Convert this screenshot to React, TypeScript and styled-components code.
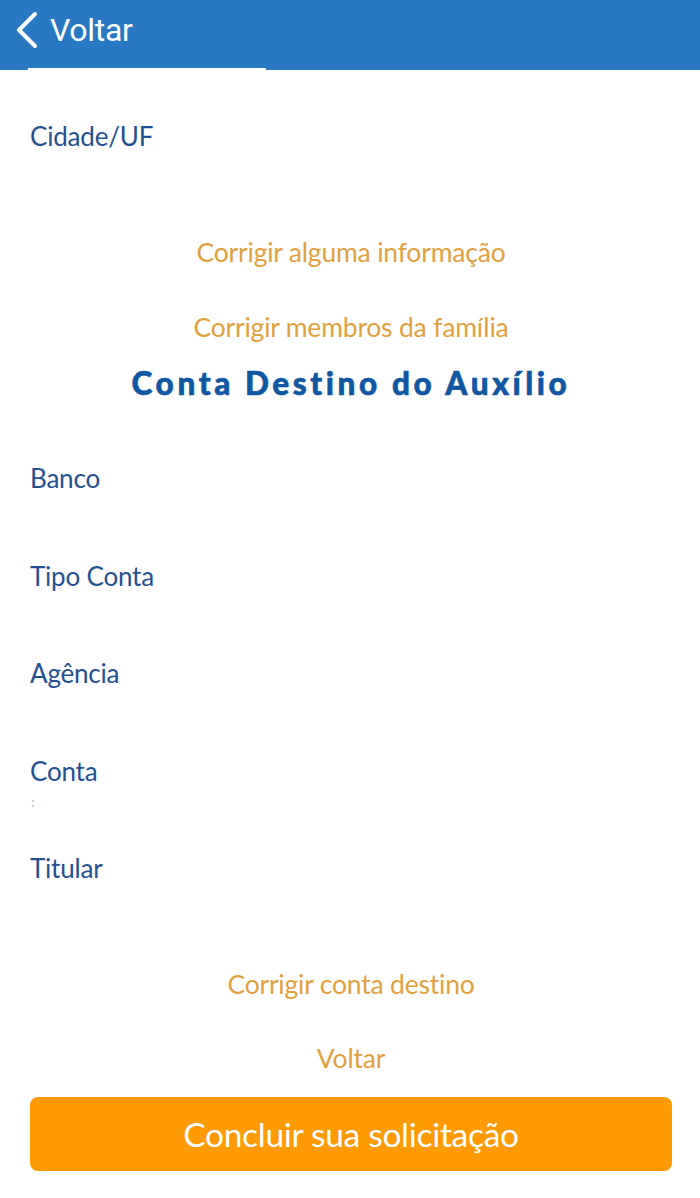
import styled, { createGlobalStyle } from "styled-components";

const GlobalStyle = createGlobalStyle`
    html, body {
        margin: 0;
        padding: 0;
        background: #fff;
    }
    * {
        box-sizing: border-box;
    }
`

const fields = ["Banco", "Tipo Conta", "Agência", "Conta", "Titular"];

export default function App() {
    return (
        <StyledPage>
            <GlobalStyle/>
            <StyledHeader>
                <StyledBackRow>
                    <svg width="26" height="38" viewBox="0 0 26 38">
                        <path d="M21 3 L5 19 L21 35" fill="none" stroke="#fff" strokeWidth="4"
                              strokeLinecap="round" strokeLinejoin="round"/>
                    </svg>
                    <StyledBackText>Voltar</StyledBackText>
                </StyledBackRow>
                <StyledHeaderEdge>
                    <StyledHeaderGap/>
                </StyledHeaderEdge>
            </StyledHeader>

            <StyledContent>
                <StyledLabel $top={50}>Cidade/UF</StyledLabel>

                <StyledLink $top={84}>Corrigir alguma informação</StyledLink>
                <StyledLink $top={43}>Corrigir membros da família</StyledLink>

                <StyledHeading>Conta Destino do Auxílio</StyledHeading>

                <StyledFieldList>
                    {fields.map((f) => (
                        <StyledField key={f}>
                            <StyledLabel $top={0}>{f}</StyledLabel>
                            {f === "Conta" && <StyledMark>:</StyledMark>}
                        </StyledField>
                    ))}
                </StyledFieldList>

                <StyledLink $top={18}>Corrigir conta destino</StyledLink>
                <StyledLink $top={42}>Voltar</StyledLink>

                <StyledButton>Concluir sua solicitação</StyledButton>
            </StyledContent>
        </StyledPage>
    );
}

const StyledPage = styled.div`
    width: 700px;
    min-height: 1198px;
    background: #fff;
    font-family: "Lato", "Noto Sans", sans-serif;
`

const StyledHeader = styled.header`
    display: flex;
    flex-direction: column;
    background: #2878c3;
    height: 70px;
`

const StyledBackRow = styled.div`
    display: flex;
    align-items: center;
    gap: 10px;
    height: 68px;
    padding: 0 0 8px 14px;
`

const StyledBackText = styled.span`
    font-family: "Roboto", "Liberation Sans", sans-serif;
    font-size: 32px;
    color: #fff;
    letter-spacing: -0.3px;
`

const StyledHeaderEdge = styled.div`
    height: 2px;
    display: flex;
    padding-left: 28px;
`

const StyledHeaderGap = styled.div`
    width: 238px;
    height: 2px;
    background: #fff;
`

const StyledContent = styled.main`
    display: flex;
    flex-direction: column;
    padding: 0 28px 0 30px;
`

const StyledLabel = styled.div<{ $top: number }>`
    margin-top: ${(p) => p.$top}px;
    height: 32px;
    line-height: 32px;
    font-size: 26px;
    color: #1f5193;
    letter-spacing: -0.2px;
`

const StyledLink = styled.div<{ $top: number }>`
    margin-top: ${(p) => p.$top}px;
    height: 32px;
    line-height: 32px;
    text-align: center;
    font-size: 26.5px;
    color: #e2a03e;
    letter-spacing: -0.2px;
`

const StyledHeading = styled.h2`
    margin: 22px 0 0;
    height: 36px;
    line-height: 36px;
    text-align: center;
    font-size: 31.5px;
    font-weight: 900;
    color: #0f57a2;
    letter-spacing: 3.6px;
    -webkit-text-stroke: 0.6px #0f57a2;
`

const StyledFieldList = styled.div`
    display: flex;
    flex-direction: column;
    margin-top: 61px;
`

const StyledField = styled.div`
    position: relative;
    height: 97.5px;
`

const StyledMark = styled.span`
    position: absolute;
    left: 1px;
    top: 38px;
    font-size: 14px;
    color: #b8b8b8;
`

const StyledButton = styled.button`
    margin-top: 23px;
    height: 74px;
    border: none;
    border-radius: 8px;
    background: #fd9a05;
    color: #fff;
    font-family: "Lato", "Noto Sans", sans-serif;
    font-size: 33.5px;
    letter-spacing: -0.3px;
    cursor: pointer;
`
